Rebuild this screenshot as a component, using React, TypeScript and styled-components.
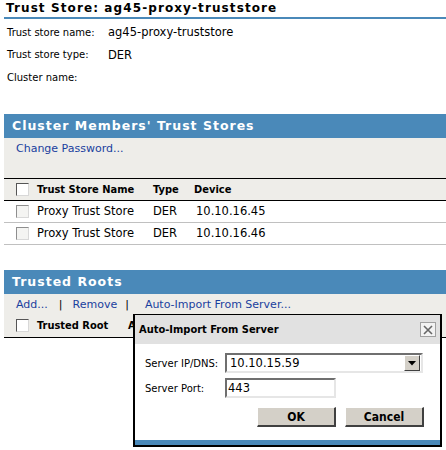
import styled, { createGlobalStyle } from 'styled-components'

const GlobalStyle = createGlobalStyle`
  body {
    margin: 0;
    background: #fff;
    font-family: 'DejaVu Sans', sans-serif;
    font-size: 11px;
    color: #000;
  }
`

const BLUE = '#4a89b9'
const GREY = '#eeede9'
const NARROW = "'DejaVu Sans Condensed', 'DejaVu Sans', sans-serif"

const Page = styled.div`
  position: relative;
  width: 442px;
  height: 450px;
  padding-left: 4px;
  overflow: hidden;
`

const Title = styled.div`
  height: 17px;
  padding-left: 2px;
  border-bottom: 2px solid ${BLUE};
  font-weight: bold;
  font-size: 12px;
  letter-spacing: 1.1px;
  line-height: 16px;
`

const InfoGrid = styled.div`
  display: grid;
  grid-template-columns: 101px 1fr;
  grid-auto-rows: 22.5px;
  align-items: center;
  padding: 2px 0 0 3px;
`

const Label = styled.span`
  font-size: 10px;
`

const Value = styled.span`
  font-size: 11.5px;
`

const SectionHeader = styled.div<{ $top: number }>`
  margin-top: ${(p) => p.$top}px;
  height: 24px;
  background: ${BLUE};
  color: #fff;
  padding-left: 8px;
  font-weight: bold;
  font-size: 12.5px;
  letter-spacing: 1px;
  line-height: 24px;
`

const Toolbar = styled.div<{ $height: number }>`
  height: ${(p) => p.$height}px;
  background: ${GREY};
  display: flex;
  align-items: flex-start;
  padding: 4px 0 0 12px;
  box-sizing: border-box;
`

const Link = styled.span`
  color: #1a3f9e;
`

const Pipe = styled.span<{ $left: number; $right: number }>`
  margin: 0 ${(p) => p.$right}px 0 ${(p) => p.$left}px;
  color: #000;
`

const Row = styled.div<{ $head?: boolean; $cols: string }>`
  display: grid;
  grid-template-columns: ${(p) => p.$cols};
  align-items: center;
  height: 21px;
  background: ${(p) => (p.$head ? GREY : '#fff')};
  border-top: ${(p) => (p.$head ? '1px solid #000' : 'none')};
  border-bottom: 1px solid ${(p) => (p.$head ? '#000' : '#c0c0c0')};
  font-family: ${(p) => (p.$head ? NARROW : 'inherit')};
  font-weight: ${(p) => (p.$head ? 'bold' : 'normal')};
  font-size: ${(p) => (p.$head ? '11px' : '11.5px')};
`

const HeadRow = styled(Row)`
  border-top: none;
  height: 22px;
`

const CheckCell = styled.div`
  padding-left: 12px;
  display: flex;
`

const Checkbox = styled.span<{ $dim?: boolean }>`
  width: 11px;
  height: 11px;
  background: ${(p) => (p.$dim ? '#f4f4f2' : '#fff')};
  border-top: 1px solid ${(p) => (p.$dim ? '#8e8e8e' : '#555')};
  border-left: 1px solid ${(p) => (p.$dim ? '#8e8e8e' : '#555')};
  border-bottom: 1px solid #d8d8d8;
  border-right: 1px solid #d8d8d8;
`

const Dialog = styled.div`
  position: absolute;
  left: 133px;
  top: 314px;
  width: 305px;
  height: 130px;
  border: 2px solid #000;
  border-top-width: 1px;
  background: #fff;
  display: flex;
  flex-direction: column;
`

const DialogTitle = styled.div`
  height: 29px;
  background: #e1e1e1;
  display: flex;
  align-items: center;
  justify-content: space-between;
  padding: 0 4px 0 4px;
  font-family: ${NARROW};
  font-weight: bold;
  font-size: 11px;
`

const CloseButton = styled.span`
  width: 14px;
  height: 13px;
  border: 1px solid #a0a0a0;
  display: flex;
  align-items: center;
  justify-content: center;
  background: #f2f2f2;
`

const DialogBody = styled.div`
  padding: 9px 0 0 10px;
  display: grid;
  grid-template-columns: 80px auto;
  row-gap: 5px;
  align-items: center;
`

const Field = styled.div<{ $width: number }>`
  width: ${(p) => p.$width}px;
  height: 16px;
  border-top: 2px solid #6f6f6f;
  border-left: 2px solid #6f6f6f;
  border-bottom: 2px solid #e6e6e6;
  border-right: 2px solid #e6e6e6;
  display: flex;
  align-items: center;
  font-size: 11.5px;
  padding-left: 1px;
  box-sizing: content-box;
`

const SelectValue = styled.span`
  flex: 1;
  padding-left: 2px;
`

const ArrowButton = styled.span`
  width: 14px;
  height: 14px;
  margin-right: 1px;
  background: #d4d0c8;
  border-top: 1px solid #fff;
  border-left: 1px solid #fff;
  border-right: 1px solid #404040;
  border-bottom: 1px solid #404040;
  display: flex;
  align-items: center;
  justify-content: center;
`

const Buttons = styled.div`
  display: flex;
  justify-content: flex-end;
  gap: 9px;
  padding: 9px 16px 0 0;
`

const Button = styled.span`
  width: 76px;
  height: 17px;
  background: #d4d0c8;
  border-top: 1px solid #fff;
  border-left: 1px solid #fff;
  border-right: 2px solid #404040;
  border-bottom: 2px solid #404040;
  display: flex;
  align-items: center;
  justify-content: center;
  font-family: ${NARROW};
  font-weight: bold;
  font-size: 12px;
`

const BlueFooter = styled.div`
  margin-top: auto;
  height: 5px;
  background: ${BLUE};
`

export default function App() {
  const cols = '33px 116px 41px 1fr'
  return (
    <Page>
      <GlobalStyle />
      <Title>Trust Store: ag45-proxy-truststore</Title>
      <InfoGrid>
        <Label>Trust store name:</Label>
        <Value>ag45-proxy-truststore</Value>
        <Label>Trust store type:</Label>
        <Value>DER</Value>
        <Label>Cluster name:</Label>
        <Value />
      </InfoGrid>

      <SectionHeader $top={25}>Cluster Members' Trust Stores</SectionHeader>
      <Toolbar $height={40}>
        <Link>Change Password...</Link>
      </Toolbar>
      <Row $head $cols={cols}>
        <CheckCell>
          <Checkbox />
        </CheckCell>
        <span>Trust Store Name</span>
        <span>Type</span>
        <span>Device</span>
      </Row>
      {['10.10.16.45', '10.10.16.46'].map((ip) => (
        <Row key={ip} $cols={cols}>
          <CheckCell>
            <Checkbox $dim />
          </CheckCell>
          <span>Proxy Trust Store</span>
          <span>DER</span>
          <span style={{ paddingLeft: 2 }}>{ip}</span>
        </Row>
      ))}

      <SectionHeader $top={25}>Trusted Roots</SectionHeader>
      <Toolbar $height={21}>
        <Link>Add...</Link>
        <Pipe $left={11} $right={10}>|</Pipe>
        <Link>Remove</Link>
        <Pipe $left={8} $right={16}>|</Pipe>
        <Link>Auto-Import From Server...</Link>
      </Toolbar>
      <HeadRow $head $cols="33px 91px 1fr">
        <CheckCell>
          <Checkbox />
        </CheckCell>
        <span>Trusted Root</span>
        <span>A</span>
      </HeadRow>

      <Dialog>
        <DialogTitle>
          <span>Auto-Import From Server</span>
          <CloseButton>
            <svg width="10" height="10" viewBox="0 0 10 10">
              <path d="M1 1 L9 9 M9 1 L1 9" stroke="#666" strokeWidth="1.6" />
            </svg>
          </CloseButton>
        </DialogTitle>
        <DialogBody>
          <Label>Server IP/DNS:</Label>
          <Field $width={193}>
            <SelectValue>10.10.15.59</SelectValue>
            <ArrowButton>
              <svg width="8" height="5" viewBox="0 0 8 5">
                <path d="M0 0 H8 L4 4.5 Z" fill="#000" />
              </svg>
            </ArrowButton>
          </Field>
          <Label>Server Port:</Label>
          <Field $width={106}>443</Field>
        </DialogBody>
        <Buttons>
          <Button>OK</Button>
          <Button>Cancel</Button>
        </Buttons>
        <BlueFooter />
      </Dialog>
    </Page>
  )
}
